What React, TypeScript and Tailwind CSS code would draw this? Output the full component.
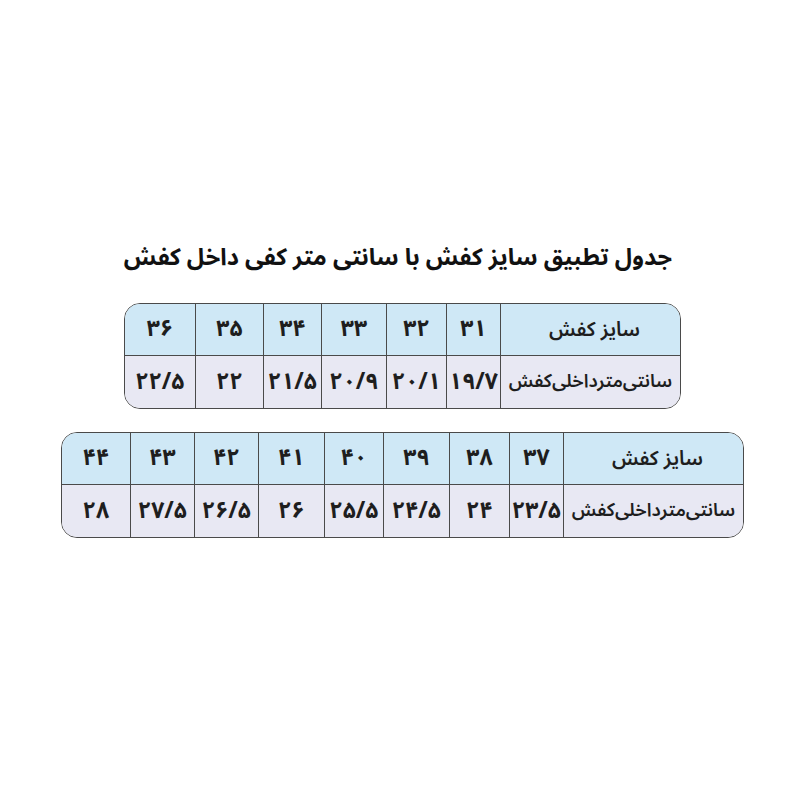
import React from "react";

const fa = { fontFamily: '"Noto Sans Arabic", "DejaVu Sans", sans-serif' };

function Table({
  cols,
  head,
  data,
}: {
  cols: string;
  head: string[];
  data: string[];
}) {
  const n = head.length;
  return (
    <div
      dir="rtl"
      className="border-[1.5px] border-[#4a4a4a] rounded-[16px] overflow-hidden"
    >
      <div className={`grid ${cols}`}>
        {head.map((h, i) => (
          <div
            key={"h" + i}
            className={`h-[52px] flex items-center justify-center bg-[#cfe8f6] border-b-[1.5px] border-[#4a4a4a] whitespace-nowrap ${
              i < n - 1 ? "border-l-[1.5px]" : ""
            } ${i === 0 ? "text-[20px] font-semibold pl-[8px]" : "text-[23px] font-bold"} text-[#1e1e1e]`}
          >
            {h}
          </div>
        ))}
        {data.map((d, i) => (
          <div
            key={"d" + i}
            className={`h-[52px] flex items-center justify-center bg-[#e8e8f3] border-[#4a4a4a] whitespace-nowrap ${
              i < n - 1 ? "border-l-[1.5px]" : ""
            } ${i === 0 ? "text-[18.5px] font-semibold" : "text-[23px] font-bold"} text-[#1e1e1e]`}
          >
            {d}
          </div>
        ))}
      </div>
    </div>
  );
}

export default function App() {
  return (
    <div className="w-[800px] h-[800px] bg-white flex flex-col items-center" style={fa}>
      <div
        dir="rtl"
        className="mt-[238px] h-[40px] leading-[40px] text-[23.5px] font-bold text-[#111] whitespace-nowrap pr-[4px]"
      >
        جدول تطبیق سایز کفش با سانتی متر کفی داخل کفش
      </div>
      <div className="mt-[25px] pl-[5px]">
        <Table
          cols="grid-cols-[180px_54px_60px_65px_58px_68px_70px]"
          head={["سایز کفش", "۳۱", "۳۲", "۳۳", "۳۴", "۳۵", "۳۶"]}
          data={["سانتی‌مترداخلی‌کفش", "۱۹/۷", "۲۰/۱", "۲۰/۹", "۲۱/۵", "۲۲", "۲۲/۵"]}
        />
      </div>
      <div className="mt-[23px] pl-[5px]">
        <Table
          cols="grid-cols-[180px_54px_60px_66px_59px_66px_64px_64px_68px]"
          head={["سایز کفش", "۳۷", "۳۸", "۳۹", "۴۰", "۴۱", "۴۲", "۴۳", "۴۴"]}
          data={["سانتی‌مترداخلی‌کفش", "۲۳/۵", "۲۴", "۲۴/۵", "۲۵/۵", "۲۶", "۲۶/۵", "۲۷/۵", "۲۸"]}
        />
      </div>
    </div>
  );
}
